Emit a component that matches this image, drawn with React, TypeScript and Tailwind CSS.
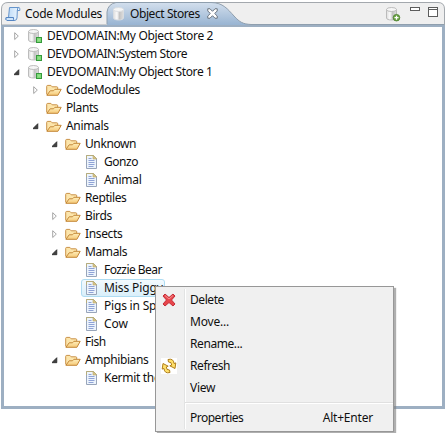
import React from "react";

type Kind = "store" | "folder" | "doc";
type Node = {
  label: string;
  level: number;
  kind: Kind;
  arrow?: "open" | "closed";
  track: string;
  selected?: boolean;
};

const nodes: Node[] = [
  { label: "DEVDOMAIN:My Object Store 2", level: 0, kind: "store", arrow: "closed", track: "tracking-[-0.34px]" },
  { label: "DEVDOMAIN:System Store", level: 0, kind: "store", arrow: "closed", track: "tracking-[-0.42px]" },
  { label: "DEVDOMAIN:My Object Store 1", level: 0, kind: "store", arrow: "open", track: "tracking-[-0.36px]" },
  { label: "CodeModules", level: 1, kind: "folder", arrow: "closed", track: "tracking-[-0.32px]" },
  { label: "Plants", level: 1, kind: "folder", track: "tracking-[-0.4px]" },
  { label: "Animals", level: 1, kind: "folder", arrow: "open", track: "tracking-[-0.35px]" },
  { label: "Unknown", level: 2, kind: "folder", arrow: "open", track: "tracking-[-0.4px]" },
  { label: "Gonzo", level: 3, kind: "doc", track: "tracking-[-0.45px]" },
  { label: "Animal", level: 3, kind: "doc", track: "tracking-[-0.3px]" },
  { label: "Reptiles", level: 2, kind: "folder", track: "tracking-[-0.4px]" },
  { label: "Birds", level: 2, kind: "folder", arrow: "closed", track: "tracking-[-0.4px]" },
  { label: "Insects", level: 2, kind: "folder", arrow: "closed", track: "tracking-[-0.35px]" },
  { label: "Mamals", level: 2, kind: "folder", arrow: "open", track: "tracking-[-0.4px]" },
  { label: "Fozzie Bear", level: 3, kind: "doc", track: "tracking-[-0.55px]" },
  { label: "Miss Piggy", level: 3, kind: "doc", selected: true, track: "tracking-[-0.1px]" },
  { label: "Pigs in Space", level: 3, kind: "doc", track: "tracking-[-0.2px]" },
  { label: "Cow", level: 3, kind: "doc", track: "tracking-[-0.1px]" },
  { label: "Fish", level: 2, kind: "folder", track: "tracking-[-0.4px]" },
  { label: "Amphibians", level: 2, kind: "folder", arrow: "open", track: "tracking-[-0.38px]" },
  { label: "Kermit the Frog", level: 3, kind: "doc", track: "tracking-[-0.3px]" },
];

const indents = ["pl-[10px]", "pl-[29px]", "pl-[48px]", "pl-[67px]"];

function Defs() {
  return (
    <svg className="absolute size-0">
      <defs>
        <linearGradient id="cyl" x1="0" x2="1" y1="0" y2="0">
          <stop offset="0" stopColor="#dedede" />
          <stop offset="0.35" stopColor="#fafafa" />
          <stop offset="0.6" stopColor="#c4c4c4" />
          <stop offset="1" stopColor="#dedede" />
        </linearGradient>
        <linearGradient id="fold" x1="0" x2="0" y1="0" y2="1">
          <stop offset="0" stopColor="#fff0bd" />
          <stop offset="1" stopColor="#f5c876" />
        </linearGradient>
        <linearGradient id="tab" x1="0" x2="0" y1="0" y2="1">
          <stop offset="0" stopColor="#d3dfed" />
          <stop offset="1" stopColor="#98b4d2" />
        </linearGradient>
        <linearGradient id="scroll" x1="0" x2="1" y1="0" y2="0">
          <stop offset="0" stopColor="#b4d5f5" />
          <stop offset="1" stopColor="#eef7ff" />
        </linearGradient>
      </defs>
    </svg>
  );
}

function StoreIcon({ badge }: { badge?: "square" | "plus" }) {
  const edge = badge ? "#b5b5b5" : "#d9dde0";
  return (
    <svg className="size-4 shrink-0" viewBox="0 0 16 16">
      <path d="M1.500 3.500v8.500c0 1.200 2.200 2 5 2s5-.8 5-2V3.500z" fill="url(#cyl)" stroke={edge} strokeWidth="0.9" />
      <ellipse cx="6.500" cy="3.500" rx="5" ry="2" fill="#f6f6f6" stroke={edge} strokeWidth="0.9" />
      {badge === "square" && (
        <>
          <rect x="9.500" y="9.500" width="5" height="5" fill="#7fd878" stroke="#359a3c" />
          <rect x="11" y="11" width="2" height="2" fill="#8fe087" />
        </>
      )}
      {badge === "plus" && (
        <>
          <circle cx="11.500" cy="11.700" r="3.300" fill="#6da544" stroke="#487c2b" strokeWidth="0.8" />
          <path d="M11.500 9.700v4M9.500 11.700h4" stroke="#fff" strokeWidth="1.200" />
        </>
      )}
    </svg>
  );
}

function FolderIcon() {
  return (
    <svg className="size-4 shrink-0" viewBox="0 0 16 16">
      <path d="M.7 12.500V4.300q0-.9 1-.9h3.200l1.300 1.400h4.600q.9 0 .9.900v2" fill="#fce5ab" stroke="#ca9248" />
      <path d="M.9 13.300l3.300-4.500h3.300l1.400-1.500h6.300l-3.300 6z" fill="url(#fold)" stroke="#c48737" strokeLinejoin="round" />
    </svg>
  );
}

function DocIcon() {
  return (
    <svg className="size-4 shrink-0" viewBox="0 0 16 16">
      <path d="M2.500 1.500h7l3 3v10h-10z" fill="#edf4fc" stroke="#98a5ba" />
      <path d="M2.500 5V1.500h7l3 3" fill="none" stroke="#b7ad7c" />
      <path d="M9 1.500l3.500 3.500H9z" fill="#dbc888" stroke="#b9a66a" strokeWidth="0.6" />
      <path d="M4.500 4.500h3M4.500 6.500h6M4.500 8.500h6M4.500 10.500h6M4.500 12.500h5" stroke="#8fa3d6" />
    </svg>
  );
}

function Arrow({ state }: { state?: "open" | "closed" }) {
  return (
    <svg className="mr-[3px] h-[10px] w-[10px] shrink-0" viewBox="0 0 10 10">
      {state === "closed" && <path d="M.7 1.700v6.800l3.600-3.400z" fill="#fff" stroke="#9c9c9c" strokeWidth="0.9" />}
      {state === "open" && <path d="M4.800 2.700v5h-5z" fill="#404040" stroke="#262626" strokeWidth="0.8" />}
    </svg>
  );
}

function TreeRow({ node }: { node: Node }) {
  return (
    <div className={`relative flex h-[18px] items-center whitespace-nowrap ${indents[node.level]}`}>
      {node.selected && (
        <div className="absolute top-0 left-[77px] h-[18px] w-[84px] rounded-[3px] border border-[#aedcf2] bg-linear-to-b from-[#f3fafe] to-[#d9effa]" />
      )}
      <div className="relative flex items-center">
        <Arrow state={node.arrow} />
        {node.kind === "store" && <StoreIcon badge="square" />}
        {node.kind === "folder" && <FolderIcon />}
        {node.kind === "doc" && <DocIcon />}
        <span className={`ml-1 leading-[18px] ${node.track}`}>{node.label}</span>
      </div>
    </div>
  );
}

function ScriptIcon() {
  return (
    <svg className="size-4 shrink-0" viewBox="0 0 16 16">
      <path d="M4.500 1.500h9.500q-1.700 1-1.700 3.500l-.3 7q-.3 2.500-2.500 2.500H2q-1.800-1-.8-3h2.300z" fill="url(#scroll)" stroke="#6594cb" />
      <path d="M1.200 11.500h7.300q-.5 2 .8 3H2q-1.800-1-.8-3z" fill="#cfe5fa" stroke="#5585c2" />
      <path d="M12.300 4.500h2.500q.6-2.700-1-3-1.400.3-1.500 3z" fill="#f4faff" stroke="#6594cb" />
    </svg>
  );
}

function TabBar() {
  return (
    <div className="relative h-[21px] shrink-0">
      <svg className="absolute -top-px left-0 h-[23px] w-[444px]" viewBox="0 0 444 23">
        <path d="M.5 23V7Q.5.500 7 .5h430q6.500 0 6.500 6.500v16z" fill="#efefef" stroke="#a3a8ad" />
        <path d="M106 23V10q1-8 9-9.500H210c12 0 17 7 23 13.500s9 8 17 8.500V23z" fill="url(#tab)" />
        <path d="M106 22V10q1-8 9-9.500H210c12 0 17 7 23 13.500s9 8 17 8.500h193" fill="none" stroke="#8f9fae" />
      </svg>
      <div className="relative flex h-full items-center pl-1">
        <ScriptIcon />
        <span className="ml-[4px] w-[87px] tracking-[-0.3px]">Code Modules</span>
        <StoreIcon />
        <span className="ml-[2px] w-[77px] tracking-[-0.42px]">Object Stores</span>
        <svg className="size-[11px]" viewBox="0 0 10 10">
          <path d="M.7.700h2L5 3 7.300.700h2v2L7 5l2.300 2.300v2h-2L5 7 2.700 9.300h-2v-2L3 5 .7 2.700z" fill="#fff" stroke="#68727d" strokeWidth="0.9" />
        </svg>
        <div className="ml-auto flex items-start pr-[7px]">
          <StoreIcon badge="plus" />
          <div className="mt-px ml-[9px] h-1 w-[10px] border border-[#5c5c5c] bg-white" />
          <div className="mt-px ml-2 h-[10px] w-[10px] border border-[#5c5c5c] bg-white">
            <div className="mt-px h-px bg-[#5c5c5c]" />
          </div>
        </div>
      </div>
    </div>
  );
}

function DeleteIcon() {
  return (
    <svg className="size-4" viewBox="0 0 16 16">
      <path d="M2 4l2-2 4 3.500L12 2l2 2-3.500 4 3.500 4-2 2-4-3.500L4 14l-2-2 3.500-4z" fill="#e8464b" stroke="#c42d38" strokeLinejoin="round" />
      <path d="M4 3.500l4 3.500 4-3.500" fill="none" stroke="#f59290" />
    </svg>
  );
}

function RefreshIcon() {
  return (
    <svg className="size-4 bg-white" viewBox="0 0 16 16">
      <g fill="#ffe06a" stroke="#b07f1c" strokeWidth="1" strokeLinejoin="round">
        <path d="M7 1.500q5.500-1.500 6 4l1.800-.6-.8 5.600-5.200-2.700 1.900-.7Q10.800 3.700 7.500 4z" />
        <path d="M9 14.500q-5.500 1.500-6-4l-1.800.6.8-5.600 5.200 2.700-1.900.7Q5.200 12.300 8.500 12z" />
      </g>
    </svg>
  );
}

const menuItems = [
  { label: "Delete", icon: <DeleteIcon />, track: "tracking-[-0.42px]" },
  { label: "Move...", track: "tracking-[-0.2px]" },
  { label: "Rename...", track: "tracking-[-0.42px]" },
  { label: "Refresh", icon: <RefreshIcon />, track: "tracking-[-0.42px]" },
  { label: "View", track: "tracking-[-0.3px]" },
];

type MenuRowProps = { label: string; icon?: React.ReactNode; shortcut?: string; track: string };

function MenuRow({ label, icon, shortcut, track }: MenuRowProps) {
  return (
    <div className="flex h-[22px] items-center pr-[20px]">
      <div className="w-[34px] pl-[5px]">{icon}</div>
      <span className={track}>{label}</span>
      {shortcut && <span className="ml-auto tracking-[-0.2px]">{shortcut}</span>}
    </div>
  );
}

function ContextMenu() {
  return (
    <div className="absolute top-[286px] left-[155px] h-[146px] w-[239px] border border-[#979797] bg-[#f0f0f0] pt-[2px] shadow-[2px_2px_1px_#808080a0]">
      <div className="absolute top-[2px] bottom-[2px] left-[28px] w-[2px] border-l border-[#e2e3e3] bg-white" />
      <div className="relative">
        {menuItems.map((m) => (
          <MenuRow key={m.label} label={m.label} icon={m.icon} track={m.track} />
        ))}
        <div className="mt-[3px] mb-[3px] ml-[29px] h-[2px] border-t border-[#e0e0e0] bg-white" />
        <MenuRow label="Properties" shortcut="Alt+Enter" track="tracking-[-0.5px]" />
      </div>
    </div>
  );
}

export default function App() {
  return (
    <div className="relative h-[433px] w-[446px] overflow-hidden bg-white pt-[3px] pl-px font-['Noto_Sans',sans-serif] text-[12px] leading-[18px] text-[#101010]">
      <Defs />
      <div className="flex h-[406px] w-[444px] flex-col">
        <TabBar />
        <div className="min-h-0 flex-1 overflow-hidden border-[3px] border-[#9dafc2] bg-white">
          <div>
            {nodes.map((n) => (
              <TreeRow key={n.label} node={n} />
            ))}
          </div>
        </div>
      </div>
      <ContextMenu />
    </div>
  );
}
